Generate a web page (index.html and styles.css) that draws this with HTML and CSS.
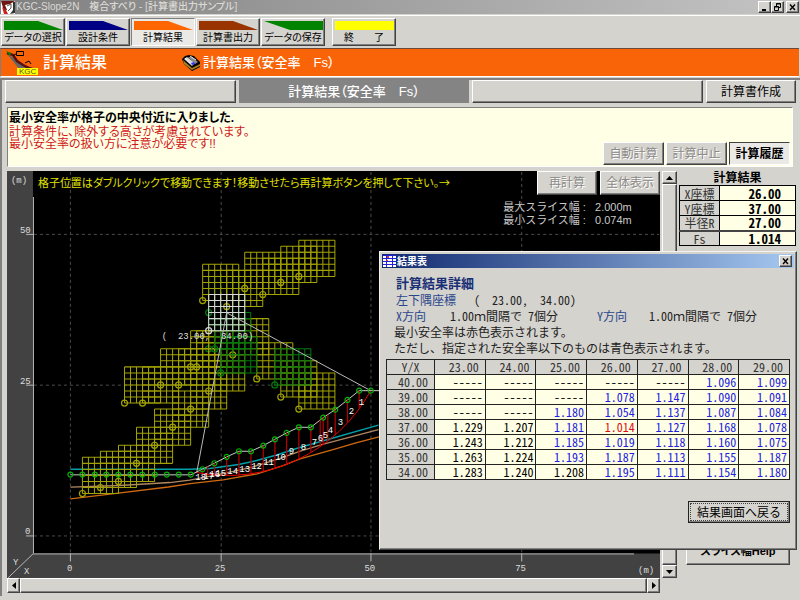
FILE: index.html
```html
<!DOCTYPE html>
<html lang="ja">
<head>
<meta charset="utf-8">
<title>KGC-Slope2N 複合すべり</title>
<link rel="stylesheet" href="styles.css">
</head>
<body>
<header class="titlebar">
  <svg class="app-icon" viewBox="0 0 14 13" aria-hidden="true"><path fill="#fff" d="M0 0h14v13H0z"/><path fill="#701414" d="M0 0h14L9 3 4 4l2 5-3 1z"/><path fill="#c22" d="M1 6l4 3 2 4H3z"/><path fill="#333" d="M12 1l2 0v11l-5 1 3-4z"/><path fill="none" stroke="#555" d="M6 5l4-2v4l-3 3"/></svg>
  <h1 class="titlebar-text">KGC-Slope2N　複合すべり - [計算書出力サンプル]</h1>
  <div class="window-buttons">
    <button class="win-btn" aria-label="最小化"><svg viewBox="0 0 9 9"><path fill="#000" d="M2 6h4v2H2z"/></svg></button>
    <button class="win-btn" aria-label="元に戻す"><svg viewBox="0 0 9 9"><path fill="none" stroke="#000" d="M3.500 3V.5h4v4H6M3 1h5M1.500 3.500h4v4h-4zM1 4h5"/></svg></button>
    <button class="win-btn win-close" aria-label="閉じる"><svg viewBox="0 0 9 9"><path stroke="#000" stroke-width="1.400" d="M2 1.500l5 5.500M7 1.500L2 7"/></svg></button>
  </div>
</header>

<nav class="toolbar">
  <button class="tool"><svg viewBox="0 0 59 10" preserveAspectRatio="none"><path fill="#008400" d="M0 0h34l25 10H0z"/></svg>データの選択</button>
  <button class="tool"><svg viewBox="0 0 59 10" preserveAspectRatio="none"><path fill="#000084" d="M0 0h34l25 10H0z"/></svg>設計条件</button>
  <button class="tool pressed"><svg viewBox="0 0 59 10" preserveAspectRatio="none"><path fill="#ff6600" d="M0 0h34l25 10H0z"/></svg>計算結果</button>
  <button class="tool"><svg viewBox="0 0 59 10" preserveAspectRatio="none"><path fill="#993300" d="M0 0h34l25 10H0z"/></svg>計算書出力</button>
  <button class="tool"><svg viewBox="0 0 59 10" preserveAspectRatio="none"><path fill="#008400" d="M0 0h59v10H26z"/></svg>データの保存</button>
  <button class="tool tool-exit"><svg viewBox="0 0 59 10" preserveAspectRatio="none"><path fill="#ffff00" d="M0 0h59v10H0z"/></svg>終　　了</button>
</nav>

<section class="banner">
  <svg class="kgc-icon" viewBox="0 0 34 26"><path fill="#666" d="M1 4l7 4 9 8 11 2 2 3-16-1z"/><path fill="none" stroke="#5a0f0f" stroke-width="2.500" d="M1 3l6 2 4 6 6 4 6 3 5 2"/><path fill="#080" d="M0 1l5 2-1 3z"/><path fill="none" stroke="#000" d="M10.500 1.500h7v4h-7zM7 6l4-3M19 13l4-2 2 3"/><path fill="#ff0" d="M11 18h21v7H11z"/><text class="kgc-text" x="13" y="24">KGC</text></svg>
  <h2 class="banner-title">計算結果</h2>
  <svg class="calc-icon" viewBox="0 0 19 16"><path fill="#000" d="M0 4l3-3 4-1 5 1 6 6v5l-8 4L2 9z"/><path fill="#a97d22" d="M1 5l9 8v2L2 9zM10 13l8-4v2l-8 4z"/><path fill="#d8d8d8" d="M2 4l3-2 8 6-3 3z"/><path fill="#8a8a8a" d="M6 2l4 0 6 5-3 2z"/><path fill="#33f" d="M9 8l3-1 1 2-3 1z"/><path stroke="#eee" d="M8 1l6 4M3 3l5 5"/></svg>
  <h3 class="banner-sub">計算結果（安全率　Fs）</h3>
</section>

<div class="workspace">
  <div class="tabs">
    <button class="tab" aria-label="空きタブ"></button>
    <button class="tab tab-active">計算結果（安全率　Fs）</button>
    <button class="tab" aria-label="空きタブ"></button>
    <button class="tab tab-make">計算書作成</button>
  </div>

  <section class="message">
    <div class="message-text">
      <p class="msg-main">最小安全率が格子の中央付近に入りました.</p>
      <p class="msg-warn">計算条件に、除外する高さが考慮されています。</p>
      <p class="msg-warn">最小安全率の扱い方に注意が必要です!!</p>
    </div>
    <div class="message-actions">
      <button class="btn" disabled>自動計算</button>
      <button class="btn" disabled>計算中止</button>
      <button class="btn btn-on">計算履歴</button>
    </div>
  </section>

  <main class="main">
    <div class="plot-area">
      <svg class="plot" viewBox="7 171 654 408" role="img" aria-label="すべり円弧図">
        <defs>
          <g id="mesh" fill="none"><path stroke-width=".17" d="M0 0h6M0-1h6M0-2h6M0-3h6M0-4h6M0-5h6M0-6h6M0 0v-6M1 0v-6M2 0v-6M3 0v-6M4 0v-6M5 0v-6M6 0v-6"/><circle r=".5" stroke-width=".2"/></g>
          <circle id="node" r="2.500"/>
        </defs>
        <path fill="#000" d="M7 171h654v408H7z"/>
        <path fill="#424242" d="M7 171h26v383h628v25H7z"/>
        <path class="axis-dash" d="M70.500 172v382M221.500 172v382M371.500 172v382M522.500 172v382M34 234.500h626M34 385.500h626M34 536.500h626"/>
        <path class="axis" d="M33.500 197v357M8 578.500l25-24h602M26 234.500h7M26 385.500h7M26 536.500h7M70.500 554v8M221.500 554v8M371.500 554v8M522.500 554v8"/>
        <g class="scale-text">
          <text x="11" y="183">(m)</text><text x="20" y="233">50</text><text x="20" y="384">25</text><text x="25" y="535">0</text>
          <text x="13" y="566">Y</text><text x="24" y="575">X</text><text x="67" y="572">0</text><text x="215" y="572">25</text><text x="365" y="572">50</text><text x="516" y="572">75</text><text x="639" y="574">(m)</text>
        </g>
        <g fill="none">
          <path stroke="#00a0a8" stroke-width="1.500" d="M70.500 469.700H190l20-.7 29-4 18-4 20-5.500 23-7.500 23-6.500 56-16"/>
          <path stroke="#ccc" d="M70.500 475.300H191l11.700-5.600 12-6 12.300-6.400 12.300-5.600h12l12.400-5.700 11.600-6.300 11.700-6.400 12.300-5.600h12l12.400-9.700 12-8 12.300-9.700 11.700-9.300H381"/>
          <path stroke="#b08860" stroke-width="1.300" d="M70.500 487.700L120 486l50-3 20-2.500 17-3.200 16-3.300 27-5.700 30-9.300 20-7.300 23-7 56-14.700"/>
          <path stroke="#d06a10" stroke-width="1.300" d="M70.500 499.300l48-5.600 50-6.200 22-3.500 33-3.700 34-6 26-8.300 17-6.700 33-9.300 23-6.700 23-6"/>
          <path stroke="#b00000" stroke-width="1.300" d="M359.700 391v17M348 400v23M335.700 410v25M328.300 415v26M323.700 418v27M320.700 420v27M311.300 428v25M299.300 428v31M287 433v32M275.300 440v29M263.700 446v26M251.300 452v23M239.300 452v24M227 457v19M214.700 464v12M208 467v9M202.700 470v5"/>
          <path stroke="#e80000" d="M371.300 391A163.700 163.700 0 0 1 197 473"/>
        </g>
        <g transform="translate(70.5 536.3) scale(6.02 6.04)">
          <g stroke="#007a0c"><use href="#mesh" x="23" y="-31"/><use href="#mesh" x="23" y="-37"/></g>
          <g stroke="#a2a200">
            <use href="#mesh" x="2" y="-7"/><use href="#mesh" x="5" y="-8"/><use href="#mesh" x="8" y="-9"/><use href="#mesh" x="11" y="-12"/><use href="#mesh" x="14" y="-15"/><use href="#mesh" x="17" y="-18"/><use href="#mesh" x="20" y="-21"/>
            <use href="#mesh" x="9" y="-22"/><use href="#mesh" x="12" y="-22"/><use href="#mesh" x="15" y="-25"/><use href="#mesh" x="18" y="-25"/><use href="#mesh" x="20" y="-28"/><use href="#mesh" x="21" y="-28"/><use href="#mesh" x="23" y="-24"/>
            <use href="#mesh" x="27" y="-30"/><use href="#mesh" x="31" y="-26"/><use href="#mesh" x="35" y="-23"/><use href="#mesh" x="38" y="-21"/>
            <use href="#mesh" x="22" y="-39"/><use href="#mesh" x="29" y="-41"/><use href="#mesh" x="32" y="-40"/><use href="#mesh" x="35" y="-42"/><use href="#mesh" x="38" y="-43"/>
          </g>
          <g stroke="#007a0c"><use href="#mesh" x="24" y="-31"/><use href="#mesh" x="25" y="-27"/><use href="#mesh" x="34" y="-25"/></g>
          <use href="#mesh" x="26" y="-38" stroke="#a2a200"/>
          <use href="#mesh" x="23" y="-34" stroke="#d8d8d8"/>
        </g>
        <path fill="none" stroke="#bbb" d="M197 473l30-160 144.300 78"/>
        <g fill="none" stroke="#00b800" stroke-width="1.200">
          <use href="#node" x="70.500" y="475"/><use href="#node" x="82.500" y="475"/><use href="#node" x="95" y="475"/><use href="#node" x="106.500" y="475"/><use href="#node" x="118.500" y="475"/><use href="#node" x="130.500" y="475"/><use href="#node" x="142.500" y="475"/><use href="#node" x="155" y="475"/><use href="#node" x="167" y="475"/><use href="#node" x="179" y="475"/><use href="#node" x="191" y="475"/>
          <use href="#node" x="202.700" y="469.700"/><use href="#node" x="214.700" y="463.700"/><use href="#node" x="227" y="457.300"/><use href="#node" x="239.300" y="451.700"/><use href="#node" x="251.300" y="451.700"/><use href="#node" x="263.700" y="446"/><use href="#node" x="275.300" y="439.700"/><use href="#node" x="287" y="433.300"/><use href="#node" x="299.300" y="427.700"/><use href="#node" x="311.300" y="427.700"/><use href="#node" x="323.700" y="418"/><use href="#node" x="335.700" y="410"/><use href="#node" x="348" y="400.300"/><use href="#node" x="359.700" y="391"/><use href="#node" x="371.300" y="391"/>
        </g>
        <g class="slice-text">
          <text x="362" y="405">1</text><text x="352" y="414">2</text><text x="341" y="425">3</text><text x="331" y="433">4</text><text x="326" y="438">5</text><text x="321" y="441">6</text><text x="315" y="445">7</text><text x="304" y="450">8</text><text x="292" y="454">9</text><text x="281" y="460">10</text><text x="269" y="465">11</text><text x="257" y="469">12</text><text x="245" y="472">13</text><text x="233" y="474">14</text><text x="221" y="476">15</text><text x="215" y="477">16</text><text x="209" y="479">17</text><text x="201" y="480">18</text>
        </g>
        <text class="corner-text" x="162" y="339">(  23.00,  34.00)</text>
        <text class="hint-text" x="38" y="187">格子位置はダブルクリックで移動できます！移動させたら再計算ボタンを押して下さい。→</text>
        <g class="slice-info">
          <text x="504" y="211">最大スライス幅 :</text><text x="596" y="211">2.000m</text>
          <text x="504" y="224">最小スライス幅 :</text><text x="596" y="224">0.074m</text>
        </g>
      </svg>
      <div class="plot-actions">
        <button class="btn" disabled>再計算</button>
        <button class="btn" disabled>全体表示</button>
      </div>
    </div>
    <div class="scroll scroll-v">
      <button class="scroll-btn" aria-label="上へ"><svg viewBox="0 0 7 4"><path d="M0 4h7L3.500 0z"/></svg></button>
      <div class="scroll-thumb"></div>
      <button class="scroll-btn" aria-label="下へ"><svg viewBox="0 0 7 4"><path d="M0 0h7L3.500 4z"/></svg></button>
    </div>
    <aside class="side">
      <h3 class="side-title">計算結果</h3>
      <table class="result">
        <tr><th scope="row">X座標</th><td>26.00</td></tr>
        <tr><th scope="row">Y座標</th><td>37.00</td></tr>
        <tr><th scope="row">半径R</th><td>27.00</td></tr>
        <tr class="result-fs"><th scope="row">Fs</th><td>1.014</td></tr>
      </table>
      <button class="btn btn-help">スライス幅Help</button>
    </aside>
    <div class="scroll scroll-h">
      <button class="scroll-btn" aria-label="左へ"><svg viewBox="0 0 4 7"><path d="M4 0v7L0 3.500z"/></svg></button>
      <div class="scroll-thumb"></div>
      <button class="scroll-btn" aria-label="右へ"><svg viewBox="0 0 4 7"><path d="M0 0v7l4-3.500z"/></svg></button>
    </div>
  </main>
</div>

<section class="dialog" role="dialog" aria-labelledby="dialog-title">
  <header class="dialog-bar">
    <svg class="dialog-icon" viewBox="0 0 13 12"><path fill="#fff" d="M0 0h13v12H0z"/><path stroke="#2222dd" d="M0 .5h13M0 3.500h13M0 6.500h13M0 9.500h13M3.500 0v12M9.500 0v12"/><path fill="#d33" d="M4 1h2v2H4zM3 5h2v1H3z"/></svg>
    <h2 class="dialog-title" id="dialog-title">結果表</h2>
    <button class="win-btn" aria-label="閉じる"><svg viewBox="0 0 9 9"><path stroke="#000" stroke-width="1.400" d="M2 1.500l5 5.500M7 1.500L2 7"/></svg></button>
  </header>
  <div class="dialog-body">
    <h3 class="detail-title">計算結果詳細</h3>
    <dl class="detail-corner"><dt>左下隅座標</dt><dd>(  23.00,  34.00)</dd></dl>
    <dl class="detail-step"><dt>X方向</dt><dd>1.00<span class="unit">ｍ</span>間隔で 7個分</dd><dt>Y方向</dt><dd>1.00<span class="unit">ｍ</span>間隔で 7個分</dd></dl>
    <p class="detail-note">最小安全率は赤色表示されます。</p>
    <p class="detail-note">ただし、指定された安全率以下のものは青色表示されます。</p>
    <table class="grid">
      <thead><tr><th class="grid-corner">Y/X</th><th>23.00</th><th>24.00</th><th>25.00</th><th>26.00</th><th>27.00</th><th>28.00</th><th>29.00</th></tr></thead>
      <tbody>
        <tr><th>40.00</th><td>-----</td><td>-----</td><td>-----</td><td>-----</td><td>-----</td><td class="low">1.096</td><td class="low">1.099</td></tr>
        <tr><th>39.00</th><td>-----</td><td>-----</td><td>-----</td><td class="low">1.078</td><td class="low">1.147</td><td class="low">1.090</td><td class="low">1.091</td></tr>
        <tr><th>38.00</th><td>-----</td><td>-----</td><td class="low">1.180</td><td class="low">1.054</td><td class="low">1.137</td><td class="low">1.087</td><td class="low">1.084</td></tr>
        <tr><th>37.00</th><td>1.229</td><td>1.207</td><td class="low">1.181</td><td class="min">1.014</td><td class="low">1.127</td><td class="low">1.168</td><td class="low">1.078</td></tr>
        <tr><th>36.00</th><td>1.243</td><td>1.212</td><td class="low">1.185</td><td class="low">1.019</td><td class="low">1.118</td><td class="low">1.160</td><td class="low">1.075</td></tr>
        <tr><th>35.00</th><td>1.263</td><td>1.224</td><td class="low">1.193</td><td class="low">1.187</td><td class="low">1.113</td><td class="low">1.155</td><td class="low">1.187</td></tr>
        <tr><th>34.00</th><td>1.283</td><td>1.240</td><td>1.208</td><td class="low">1.195</td><td class="low">1.111</td><td class="low">1.154</td><td class="low">1.180</td></tr>
      </tbody>
    </table>
    <div class="dialog-actions"><button class="btn-back"><span>結果画面へ戻る</span></button></div>
  </div>
</section>
</body>
</html>
```
FILE: styles.css
```css
* { box-sizing: border-box; }

:root {
  --face: #d5d3ce;
  --light: #ffffff;
  --shade: #808080;
  --dark: #424242;
  --cream: #ffffe6;
}

body {
  position: relative;
  margin: 0;
  min-height: 100vh;
  background: var(--face);
  color: #000;
  font: 12px/1 "Liberation Sans", "Noto Sans CJK JP", sans-serif;
  font-feature-settings: "palt";
}

h1, h2, h3, p, dl, dd { margin: 0; font-weight: normal; }

button {
  margin: 0;
  padding: 0;
  border: 1px solid;
  border-color: var(--light) var(--dark) var(--dark) var(--light);
  box-shadow: inset -1px -1px 0 var(--shade);
  background: var(--face);
  color: #000;
  font: inherit;
  font-feature-settings: inherit;
  white-space: nowrap;
}

svg { display: block; }

/* Title bar */
.titlebar {
  display: flex;
  align-items: center;
  height: 14px;
  padding: 0 1px;
  background: linear-gradient(90deg, #808080, #c4c4c4);
  color: #dcdad5;
}
.app-icon { width: 14px; height: 13px; }
.titlebar-text { padding-left: 1px; font-size: 10px; line-height: 14px; font-weight: 500; }
.window-buttons { display: flex; margin-left: auto; }
.win-btn { display: grid; place-items: center; width: 13px; height: 12px; }
.win-btn svg { width: 9px; height: 9px; }
.win-close { margin-left: 2px; }

/* Toolbar */
.toolbar {
  display: flex;
  gap: 1px;
  height: 33px;
  margin-top: 1px;
  padding: 2px 0 2px 1px;
  border-top: 1px solid var(--light);
}
.tool {
  display: flex;
  flex-direction: column;
  align-items: center;
  width: 64px;
  height: 28px;
  padding: 2px 2px 0;
  font-size: 10px;
  line-height: 14px;
}
.tool svg { width: 59px; height: 10px; margin-bottom: 1px; }
.tool-exit { margin-left: 6px; }
.pressed {
  border-color: var(--shade) var(--light) var(--light) var(--shade);
  box-shadow: none;
  background: #eae9e6;
}

/* Banner */
.banner {
  display: flex;
  align-items: center;
  height: 29px;
  margin-right: 1px;
  padding-left: 5px;
  border-top: 1px solid #6b4a3c;
  border-left: 1px solid var(--shade);
  border-bottom: 1px solid var(--light);
  background: #f96408;
  color: #fff;
}
.kgc-icon { width: 34px; height: 26px; }
.kgc-text { font: 8px "Liberation Sans", sans-serif; fill: #553; }
.banner-title { width: 142px; padding-left: 3px; font-size: 16px; font-weight: 500; line-height: 24px; }
.calc-icon { width: 19px; height: 16px; }
.banner-sub { padding-left: 2px; font-size: 13px; font-weight: 500; line-height: 24px; }

/* Workspace */
.workspace {
  margin-top: 1px;
  padding: 0 4px 3px 5px;
  border-top: 2px solid var(--shade);
  border-left: 2px solid var(--shade);
}
.tabs {
  display: grid;
  grid-template-columns: 1fr 1fr 1fr 90px;
  gap: 3px;
  margin-left: -2px;
}
.tab { height: 23px; }
.tab-active {
  border-color: #848484;
  box-shadow: none;
  background: #848484;
  color: #fff;
  font-size: 13px;
  font-weight: 500;
}

.message {
  display: flex;
  justify-content: space-between;
  height: 60px;
  margin: 4px 3px 4px 0;
  padding: 2px 2px 0 1px;
  border: 1px solid;
  border-color: var(--shade) var(--light) var(--light) var(--shade);
  background: var(--cream);
}
.msg-main { font-weight: bold; line-height: 16px; }
.msg-warn { color: #d01818; line-height: 12px; }
.message-actions { display: flex; align-items: flex-end; gap: 2px; padding-bottom: 1px; }
.btn { width: 61px; height: 23px; }
.btn:disabled { color: #8c8a86; text-shadow: 1px 1px 0 #fff; }
.btn-on {
  border-color: var(--dark) var(--light) var(--light) var(--dark);
  box-shadow: none;
  background: #eae9e6;
  font-weight: bold;
}

/* Chart, scroll bars and side panel */
.main {
  display: grid;
  grid-template-columns: 1fr 15px 117px;
  grid-template-rows: auto 15px;
  column-gap: 2px;
}
.plot-area { position: relative; }
.plot { width: 100%; height: auto; }
.plot-actions { position: absolute; top: 0; right: 0; display: flex; gap: 3px; }
.plot-actions .btn { width: 60px; height: 24px; }
.axis { fill: none; stroke: #b8b8b8; }
.axis-dash { fill: none; stroke: #4c4c4c; stroke-dasharray: 3 3; }
.scale-text, .slice-text, .corner-text { font: 9px "Liberation Mono", monospace; fill: #ddd; white-space: pre; }
.slice-text { text-anchor: middle; fill: #fff; }
.hint-text { font: 11px "Noto Sans CJK JP", sans-serif; font-feature-settings: "palt"; fill: #e0e000; }
.slice-info { font: 11px "Liberation Sans", "Noto Sans CJK JP", sans-serif; fill: #c8c8c8; }

.scroll { display: flex; background: #e8e7e4; }
.scroll-v { flex-direction: column; }
.scroll-h { grid-column: 1; grid-row: 2; }
.scroll-btn { display: grid; place-items: center; flex: none; width: 13px; height: 13px; }
.scroll-v .scroll-btn { width: 15px; }
.scroll-h .scroll-btn { height: 15px; }
.scroll-v svg { width: 7px; height: 4px; }
.scroll-h svg { width: 4px; height: 7px; }
.scroll-thumb {
  flex: 1;
  border: 1px solid;
  border-color: var(--light) var(--dark) var(--dark) var(--light);
  box-shadow: inset -1px -1px 0 var(--shade);
  background: var(--face);
}

.side { display: flex; flex-direction: column; }
.side-title { font-size: 12px; font-weight: bold; line-height: 14px; text-align: center; }
.result { width: 100%; border-collapse: collapse; font: 12px/13px "Noto Sans CJK JP", sans-serif; font-feature-settings: "hwid"; }
.result th, .result td { height: 15px; padding: 0; border: 1px solid #000; }
.result th { width: 40px; background: var(--face); color: #333; font-weight: normal; text-align: center; }
.result td { padding-right: 14px; background: var(--cream); font-size: 13px; font-weight: bold; text-align: right; }
.result-fs th, .result-fs td { border-top: 2px solid #444; }
.btn-help { width: 104px; height: 28px; margin: auto 6px 13px auto; font-size: 11px; font-weight: bold; }

/* Result dialog */
.dialog {
  position: absolute;
  top: 251px;
  right: 3px;
  width: 418px;
  padding: 2px;
  border: 1px solid;
  border-color: #f4f3f0 var(--dark) var(--dark) #f4f3f0;
  box-shadow: inset -1px -1px 0 var(--shade);
  background: var(--face);
  font-family: "Noto Sans CJK JP", sans-serif;
  font-feature-settings: "hwid";
}
.dialog-bar {
  display: flex;
  align-items: center;
  gap: 1px;
  height: 14px;
  padding: 0 2px 0 1px;
  background: linear-gradient(90deg, #10296f, #a5c8f0);
}
.dialog-icon { width: 13px; height: 12px; }
.dialog-title { color: #fff; font-size: 10px; font-weight: bold; line-height: 14px; }
.dialog-bar .win-btn { margin-left: auto; }
.dialog-body { padding: 6px 4px 24px; line-height: 16px; }
.detail-title { padding-left: 10px; color: #1a3076; font-size: 13px; font-weight: bold; line-height: 18px; }
.detail-corner, .detail-step { padding-left: 10px; color: #222; white-space: pre; }
.detail-corner { display: flex; gap: 18px; }
.detail-step { display: grid; grid-template-columns: 54px 147px 52px 1fr; }
.unit { font-feature-settings: normal; }
dt { color: #2a468c; }
.detail-note { padding-left: 8px; color: #222; }

.grid { width: 100%; margin-top: 3px; border-collapse: collapse; table-layout: fixed; line-height: 14px; }
.grid th, .grid td { height: 15px; padding: 0 2px 0 0; border: 1px solid #222; text-align: right; }
.grid th { padding-right: 6px; background: var(--face); color: #333; font-weight: normal; }
.grid .grid-corner { width: 48px; padding: 0; text-align: center; }
.grid td { background: var(--cream); }
.grid .low { color: #2222e0; }
.grid .min { color: #e01010; }

.dialog-actions { display: flex; justify-content: flex-end; margin-top: 21px; }
.btn-back { width: 102px; height: 22px; padding: 1px; border-color: #222; }
.btn-back span { display: block; border: 1px dotted #444; line-height: 16px; }
```
